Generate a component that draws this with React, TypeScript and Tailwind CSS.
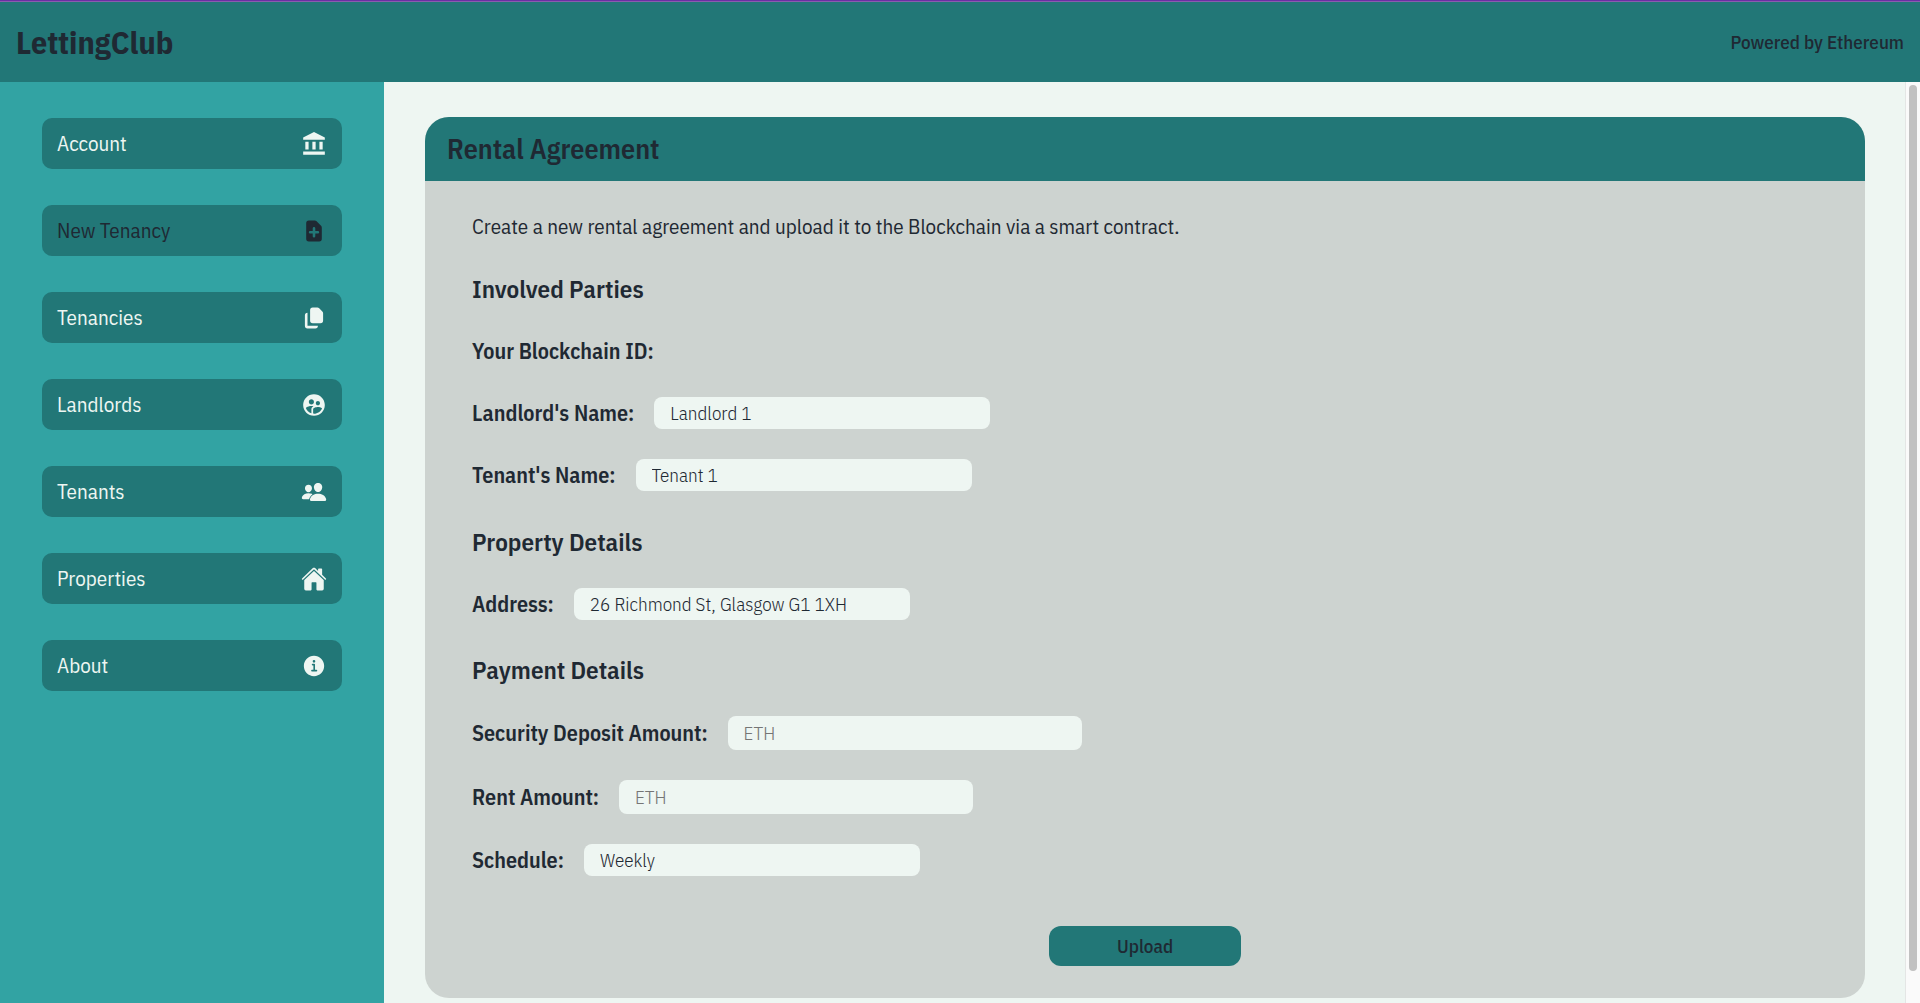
import { useState } from "react";
import type { IconType } from "react-icons";
import { MdAccountBalance, MdSupervisedUserCircle } from "react-icons/md";
import { HiDocumentAdd, HiDocumentDuplicate } from "react-icons/hi";
import { IoHome, IoInformationCircle, IoPeople } from "react-icons/io5";

const navItems: { label: string; icon: IconType; active?: boolean }[] = [
  { label: "Account", icon: MdAccountBalance },
  { label: "New Tenancy", icon: HiDocumentAdd, active: true },
  { label: "Tenancies", icon: HiDocumentDuplicate },
  { label: "Landlords", icon: MdSupervisedUserCircle },
  { label: "Tenants", icon: IoPeople },
  { label: "Properties", icon: IoHome },
  { label: "About", icon: IoInformationCircle },
];

const fieldLabel = "text-[22px] leading-8 font-semibold";
const control =
  "rounded-lg bg-[#eef6f2] px-4 text-[19px] font-light text-[#1f2933] outline-none";

function SelectField({ id, label, options }: { id: string; label: string; options: string[] }) {
  return (
    <div className="flex items-center gap-5">
      <label htmlFor={id} className={fieldLabel}>
        {label}
      </label>
      <select id={id} className={`${control} h-8 w-[336px] appearance-none`}>
        {options.map((o) => (
          <option key={o}>{o}</option>
        ))}
      </select>
    </div>
  );
}

function AmountField({ id, label }: { id: string; label: string }) {
  const [value, setValue] = useState("");
  return (
    <div className="flex items-center gap-5">
      <label htmlFor={id} className={fieldLabel}>
        {label}
      </label>
      <input
        id={id}
        type="text"
        placeholder="ETH"
        value={value}
        onChange={(e) => setValue(e.target.value)}
        className={`${control} h-[34px] w-[354px] placeholder:text-[#757575]`}
      />
    </div>
  );
}

function SectionTitle({ children }: { children: string }) {
  return <h3 className="pt-px text-[25px] leading-8 font-semibold">{children}</h3>;
}

export default function App() {
  return (
    <div className="flex h-screen flex-col overflow-hidden bg-[#eef6f2] font-['IBM_Plex_Sans_Condensed',sans-serif] text-[#1f2933]">
      <div className="h-px shrink-0 bg-[#6a2fa3]" />
      <div className="h-px shrink-0 bg-[#8a5cae]" />
      <header className="flex h-20 shrink-0 items-center justify-between bg-[#227777] px-4">
        <h1 className="text-[32px] font-bold">LettingClub</h1>
        <p className="text-[19px] font-medium">Powered by Ethereum</p>
      </header>

      <div className="flex min-h-0 flex-1">
        <nav className="flex w-1/5 shrink-0 flex-col gap-9 bg-[#32a3a3] px-[42px] pt-9">
          {navItems.map(({ label, icon: Icon, active }) => (
            <button
              key={label}
              type="button"
              className={`flex h-[51px] items-center justify-between rounded-[10px] bg-[#227777] px-[15px] text-[21px] ${
                active ? "text-[#1f2933]" : "text-[#eef6f2]"
              }`}
            >
              {label}
              <Icon className="size-[26px]" />
            </button>
          ))}
        </nav>

        <main className="min-w-0 flex-1 overflow-hidden pt-[35px] pr-10 pl-[41px]">
          <section className="overflow-hidden rounded-3xl bg-[#cdd3d0]">
            <h2 className="bg-[#227777] px-[22px] text-[28px] leading-[64px] font-semibold">
              Rental Agreement
            </h2>
            <form
              className="flex flex-col gap-[30px] px-[47px] pt-[29px] pb-8"
              onSubmit={(e) => e.preventDefault()}
            >
              <p className="text-[21px] leading-8">
                Create a new rental agreement and upload it to the Blockchain via a smart contract.
              </p>
              <SectionTitle>Involved Parties</SectionTitle>
              <p className={fieldLabel}>Your Blockchain ID:</p>
              <SelectField id="landlord" label="Landlord's Name:" options={["Landlord 1"]} />
              <SelectField id="tenant" label="Tenant's Name:" options={["Tenant 1"]} />
              <div className="mt-1 flex flex-col gap-[30px]">
                <SectionTitle>Property Details</SectionTitle>
                <SelectField
                  id="address"
                  label="Address:"
                  options={["26 Richmond St, Glasgow G1 1XH"]}
                />
              </div>
              <div className="mt-[3px] flex flex-col gap-[30px]">
                <SectionTitle>Payment Details</SectionTitle>
                <AmountField id="deposit" label="Security Deposit Amount:" />
                <AmountField id="rent" label="Rent Amount:" />
                <SelectField id="schedule" label="Schedule:" options={["Weekly", "Monthly"]} />
              </div>
              <button
                type="submit"
                className="mt-5 h-10 w-48 self-center rounded-xl bg-[#227777] text-[19px] font-medium"
              >
                Upload
              </button>
            </form>
          </section>
        </main>

        <div className="w-[15px] shrink-0 border-l border-[#e4e6e5] bg-[#fafafa] px-[3px] pt-[3px] pb-8">
          <div className="h-full w-2 rounded-full bg-[#c1c1c1]" />
        </div>
      </div>
    </div>
  );
}
